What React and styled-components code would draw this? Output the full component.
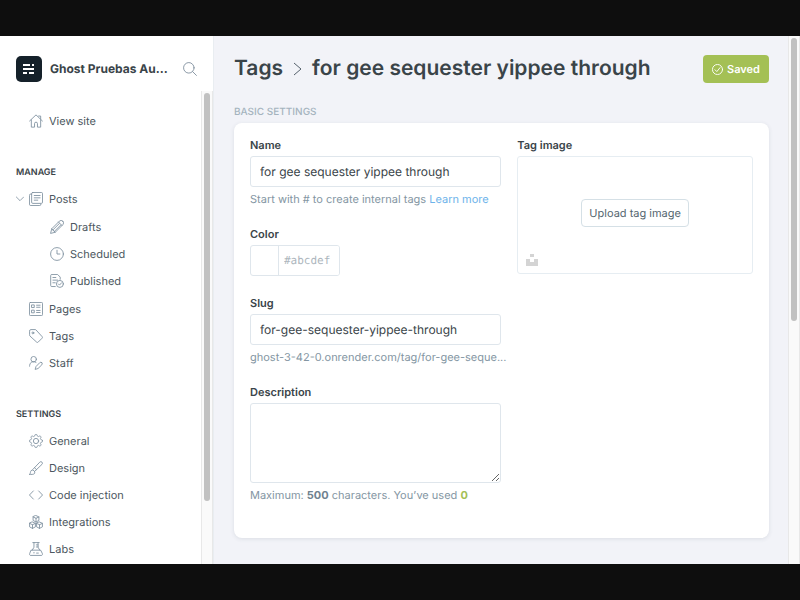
import React, { useState } from "react";
import styled, { createGlobalStyle } from "styled-components";

const GlobalStyle = createGlobalStyle`
  *, *::before, *::after { box-sizing: border-box; }
  body { margin: 0; background: #0e0e0e; font-family: Inter, "Open Sans", sans-serif; font-size: 12px; color: #3a4449; text-rendering: geometricPrecision; -webkit-font-smoothing: antialiased; }
  button, input, textarea { font: inherit; color: inherit; text-rendering: inherit; }
  ul { list-style: none; margin: 0; padding: 0; }
`;

const Frame = styled.div`
  height: 100vh;
  padding: 36px 0;
  background: #0e0e0e;
`;

const Shell = styled.div`
  display: flex;
  height: 100%;
  overflow: hidden;
  background: #f2f3f8;
`;

const Sidebar = styled.aside`
  display: flex;
  flex-direction: column;
  flex: 0 0 214px;
  min-width: 0;
  background: #fff;
  border-right: 1px solid #e9edf1;
`;

const Brand = styled.header`
  display: flex;
  align-items: center;
  flex: none;
  height: 55px;
  padding: 10px 16px 0;
  gap: 8px;
`;

const BrandName = styled.div`
  flex: 1;
  min-width: 0;
  font-size: 12px;
  font-weight: 700;
  white-space: nowrap;
`;

const IconButton = styled.button`
  display: flex;
  padding: 0;
  border: 0;
  background: none;
  color: #7c8b9a;
`;

const ScrollRow = styled.div`
  display: flex;
  flex: 1;
  min-height: 0;
`;

const Nav = styled.nav`
  flex: 1;
  min-width: 0;
  padding-top: 16px;
  overflow: hidden;
`;

const NavHeading = styled.h2`
  margin: 31px 0 4px 16px;
  font-size: 9px;
  line-height: 16px;
  font-weight: 600;
  text-transform: uppercase;
`;

const NavList = styled.ul`
  padding-left: ${(p) => (p.$nested ? "50px" : "0")};
  margin: ${(p) => (p.$nested ? "1px 0" : "0")};
`;

const NavLink = styled.a`
  display: flex;
  align-items: center;
  height: 27px;
  padding-left: ${(p) => (p.$nested ? "0" : p.$open ? "16px" : "29px")};
  gap: 6px;
  font-size: 11px;
  color: #4c5760;
  text-decoration: none;

  svg { flex: none; color: #7f91a0; }
`;

const Chevron = styled.span`
  display: flex;
  width: 7px;
`;

const Track = styled.div`
  flex: none;
  width: 12px;
  padding: 2px;
  background: #fafafa;
  border: solid #e8e8e8;
  border-width: 0 1px;
`;

const Thumb = styled.div`
  width: 6px;
  margin: 0 auto;
  height: ${(p) => p.$size};
  border-radius: 4px;
  background: #c1c1c1;
`;

const Main = styled.main`
  flex: 1;
  min-width: 0;
  padding: 19px 19px 0 20px;
  overflow: hidden;
`;

const PageHeader = styled.header`
  display: flex;
  align-items: center;
  justify-content: space-between;
  height: 28px;
`;

const Title = styled.h1`
  display: flex;
  align-items: center;
  gap: 10px;
  margin: 0;
  font-size: 21px;
  line-height: 28px;
  font-weight: 600;
  white-space: nowrap;

  a { color: inherit; text-decoration: none; }
`;

const SaveButton = styled.button`
  display: flex;
  align-items: center;
  justify-content: center;
  gap: 4px;
  height: 28px;
  padding: 0 9px;
  border: 0;
  border-radius: 4px;
  background: #a4c055;
  color: #fff;
  font-size: 11px;
  font-weight: 600;
`;

const SectionTitle = styled.h2`
  margin: 21px 0 3px;
  font-size: 10px;
  line-height: 16px;
  font-weight: 500;
  color: #a5b3be;
  text-transform: uppercase;
`;

const Card = styled.form`
  display: grid;
  grid-template-columns: minmax(0, 16fr) minmax(0, 15fr);
  gap: 16px;
  padding: 14px 16px 35px;
  border-radius: 8px;
  background: #fff;
  box-shadow: 0 1px 4px rgba(60, 70, 90, 0.12);
`;

const Fields = styled.div`
  display: flex;
  flex-direction: column;
  gap: 19px;
`;

const Field = styled.div`
  display: flex;
  flex-direction: column;
`;

const Label = styled.label`
  margin-bottom: 3px;
  font-size: 11px;
  line-height: 16px;
  font-weight: 600;
`;

const TextInput = styled.input`
  width: 100%;
  height: 31px;
  padding: 0 9px;
  border: 1px solid #dfe6ec;
  border-radius: 3px;
  background: #fff;
  outline: none;
`;

const TextArea = styled.textarea`
  width: 100%;
  height: 80px;
  padding: 8px 9px;
  border: 1px solid #dfe6ec;
  border-radius: 3px;
  background: #fff;
  outline: none;
  resize: vertical;
`;

const Help = styled.p`
  margin: 4px 0 0;
  font-size: 11px;
  line-height: 16px;
  color: #8496a3;
  white-space: nowrap;

  a { color: #6db3ea; text-decoration: none; }
  b { color: #6f8290; font-weight: 700; }
`;

const Used = styled.strong`
  color: #a4c055;
`;

const ColorGroup = styled.div`
  display: flex;
  width: 90px;
  height: 31px;
  border: 1px solid #dfe6ec;
  border-radius: 3px;
  overflow: hidden;
`;

const Swatch = styled.span`
  flex: 0 0 28px;
  border-right: 1px solid #dfe6ec;
`;

const ColorInput = styled.input`
  flex: 1;
  min-width: 0;
  padding: 0 5px;
  border: 0;
  outline: none;
  font-family: "DejaVu Sans Mono", monospace;
  font-size: 11px;
  &::placeholder { color: #adb6bd; opacity: 1; }
`;

const Dropzone = styled.div`
  display: flex;
  flex-direction: column;
  align-items: center;
  height: 118px;
  padding: 42px 8px 7px;
  border: 1px solid #e6edf2;
  border-radius: 3px;
`;

const UploadButton = styled.button`
  height: 28px;
  padding: 0 7px;
  border: 1px solid #d5e0e6;
  border-radius: 4px;
  background: #fff;
  color: #54666f;
  font-size: 11px;
`;

const UnsplashButton = styled(IconButton)`
  align-self: flex-start;
  margin-top: auto;
  color: #d4d4d4;
`;

const Svg = ({ size = 14, children, ...rest }) => (
  <svg width={size} height={size} viewBox="0 0 24 24" fill="none" stroke="currentColor"
    strokeWidth="1.5" strokeLinecap="round" strokeLinejoin="round" aria-hidden="true" {...rest}>
    {children}
  </svg>
);

const cube = (x, y) =>
  `M${x} ${y - 5.5}l5 2.300v6l-5 2.700l-5-2.700v-6zM${x - 5} ${y - 3.2}l5 2.400l5-2.400M${x} ${y - 0.8}v6.300`;

const gearOutline = Array.from({ length: 96 }, (_, i) => {
  const angle = (i / 96) * Math.PI * 2;
  const radius = 9.9 + 1.3 * Math.tanh(2.5 * Math.cos(8 * angle));
  return `${(12 + radius * Math.cos(angle)).toFixed(2)},${(12 + radius * Math.sin(angle)).toFixed(2)}`;
}).join(" ");

const icons = {
  home: <path d="M1 12L12 1.500l11 10.500M4 10v12.500h5.500v-6a2.500 2.500 0 0 1 5 0v6H20V10M16.500 3.500h3.500v5" />,
  posts: <><rect x="4.500" y=".8" width="18.700" height="18.700" rx="2" /><path d="M4.500 3.500H3a2.200 2.200 0 0 0-2.200 2.200V21a2.200 2.200 0 0 0 2.200 2.200h15.500a2 2 0 0 0 2-2M9 6h10M9 10h10M9 14h6" /></>,
  pencil: <path d="M22 2a4.200 4.200 0 0 0-6 0L3 15 1 23l8-2L22 8a4.200 4.200 0 0 0 0-6zM14.500 3.500l6 6M3 15l6 6M16 6L5 17M18.500 8.500L7.500 19.500" />,
  clock: <><circle cx="12" cy="12" r="11" /><path d="M12 5.500V12h5" /></>,
  published: <><path d="M9 21.500H3a1.800 1.800 0 0 1-1.800-1.800V2.500A1.800 1.800 0 0 1 3 .8h10l4.500 4.500V9M5 6h5M5 10.500h8M5 15h4" /><circle cx="17" cy="17" r="6" /><path d="M14.300 17l2 2 3.600-4" /></>,
  pages: <><rect x=".8" y=".8" width="22.400" height="22.400" rx="1.500" /><path d="M5 5h4v4.500H5zM5 14h4v4.500H5zM13 5.500h6M13 9h6M13 14.500h6M13 18h6" /></>,
  tag: <><path d="M1 3a2 2 0 0 1 2-2h7.500a2 2 0 0 1 1.500.6L22.400 13a2 2 0 0 1 0 2.800l-6.600 6.600a2 2 0 0 1-2.800 0L1.600 12a2 2 0 0 1-.6-1.500z" /><circle cx="6.700" cy="6.700" r="1.600" /></>,
  staff: <><circle cx="8" cy="5.500" r="4.700" /><path d="M1 17.500v-1a7 7 0 0 1 11-5.700M22 11.500a2.500 2.500 0 0 0-3.600 0l-6.400 6.500-1.500 5 5-1.500 6.500-6.400a2.500 2.500 0 0 0 0-3.600z" /></>,
  gear: <><circle cx="12" cy="12" r="4.500" /><polygon points={gearOutline} /></>,
  brush: <><path d="M1 23c2-1.500 1-4.500 2.500-6.500a4 4 0 0 1 6 5C7.500 23.500 4 23 1 23zM6.500 14.500L18.500 2a2.600 2.600 0 0 1 3.800 3.700L10 17.500M9.500 11.500l3.500 3.500" /></>,
  code: <path d="M7.500 5L.8 12l6.700 7M16.500 5l6.700 7-6.700 7" />,
  cubes: <path d={cube(12, 6.5) + cube(6, 17.5) + cube(18, 17.5)} />,
  flask: <path d="M6.500 1h11M8.500 1v8L5.500 14M15.500 1v8l3 5M4 14h16l3 6a2 2 0 0 1-1.800 3H2.800A2 2 0 0 1 1 20zM12.500 5h3M12.500 8.500h3M8 18.500h1M13 19h3" />,
};

const Icon = ({ name }) => <Svg>{icons[name]}</Svg>;

const Item = ({ icon, children, ...rest }) => (
  <li>
    <NavLink href="#" {...rest}>
      <Icon name={icon} />
      {children}
    </NavLink>
  </li>
);

export default function App() {
  const [name, setName] = useState("for gee sequester yippee through");
  const [slug, setSlug] = useState("for-gee-sequester-yippee-through");
  const [description, setDescription] = useState("");

  return (
    <Frame>
      <GlobalStyle />
      <Shell>
        <Sidebar>
          <Brand>
            <svg width="26" height="26" viewBox="0 0 26 26" aria-hidden="true">
              <rect width="26" height="26" rx="5" fill="#15212a" />
              <path fill="#fff" d="M7 8h7v2H7zM16 8h2v2h-2zM7 12h11v2H7zM7 16h4v2H7zM13 16h5v2h-5z" />
            </svg>
            <BrandName>Ghost Pruebas Au...</BrandName>
            <IconButton type="button" aria-label="Search">
              <Svg><circle cx="10" cy="10" r="9" /><path d="M16.500 16.500L23 23" /></Svg>
            </IconButton>
          </Brand>
          <ScrollRow>
            <Nav>
              <NavList>
                <Item icon="home">View site</Item>
              </NavList>
              <NavHeading>Manage</NavHeading>
              <NavList>
                <li>
                  <NavLink href="#" $open>
                    <Chevron>
                      <Svg size={8}><path strokeWidth="2.500" d="M1 6l11 11L23 6" /></Svg>
                    </Chevron>
                    <Icon name="posts" />
                    Posts
                  </NavLink>
                  <NavList $nested>
                    <Item icon="pencil" $nested>Drafts</Item>
                    <Item icon="clock" $nested>Scheduled</Item>
                    <Item icon="published" $nested>Published</Item>
                  </NavList>
                </li>
                <Item icon="pages">Pages</Item>
                <Item icon="tag">Tags</Item>
                <Item icon="staff">Staff</Item>
              </NavList>
              <NavHeading>Settings</NavHeading>
              <NavList>
                <Item icon="gear">General</Item>
                <Item icon="brush">Design</Item>
                <Item icon="code">Code injection</Item>
                <Item icon="cubes">Integrations</Item>
                <Item icon="flask">Labs</Item>
              </NavList>
            </Nav>
            <Track><Thumb $size="87%" /></Track>
          </ScrollRow>
        </Sidebar>
        <Main>
          <PageHeader>
            <Title>
              <a href="#">Tags</a>
              <svg width="9" height="14" viewBox="0 0 9 14" fill="none" stroke="#54606b" aria-hidden="true">
                <path d="M1 1l7 6-7 6" />
              </svg>
              <span>for gee sequester yippee through</span>
            </Title>
            <SaveButton type="button">
              <Svg size={11} strokeWidth="2"><circle cx="12" cy="12" r="11" /><path d="M6.500 12.500l4 4 7-8.500" /></Svg>
              Saved
            </SaveButton>
          </PageHeader>
          <SectionTitle>Basic settings</SectionTitle>
          <Card>
            <Fields>
              <Field>
                <Label htmlFor="name">Name</Label>
                <TextInput id="name" value={name} onChange={(e) => setName(e.target.value)} />
                <Help>Start with # to create internal tags <a href="#">Learn more</a></Help>
              </Field>
              <Field>
                <Label htmlFor="color">Color</Label>
                <ColorGroup>
                  <Swatch />
                  <ColorInput id="color" placeholder="#abcdef" />
                </ColorGroup>
              </Field>
              <Field>
                <Label htmlFor="slug">Slug</Label>
                <TextInput id="slug" value={slug} onChange={(e) => setSlug(e.target.value)} />
                <Help>ghost-3-42-0.onrender.com/tag/for-gee-seque...</Help>
              </Field>
              <Field>
                <Label htmlFor="description">Description</Label>
                <TextArea id="description" value={description} onChange={(e) => setDescription(e.target.value)} />
                <Help>Maximum: <b>500</b> characters. You’ve used <Used>{description.length}</Used></Help>
              </Field>
            </Fields>
            <Field>
              <Label as="span">Tag image</Label>
              <Dropzone>
                <UploadButton type="button">Upload tag image</UploadButton>
                <UnsplashButton type="button" aria-label="Unsplash">
                  <svg width="12" height="12" viewBox="0 0 12 12" fill="currentColor" aria-hidden="true">
                    <path d="M4 0h4v3H4zM0 5h4v3h4V5h4v7H0z" />
                  </svg>
                </UnsplashButton>
              </Dropzone>
            </Field>
          </Card>
        </Main>
        <Track><Thumb $size="54%" /></Track>
      </Shell>
    </Frame>
  );
}
